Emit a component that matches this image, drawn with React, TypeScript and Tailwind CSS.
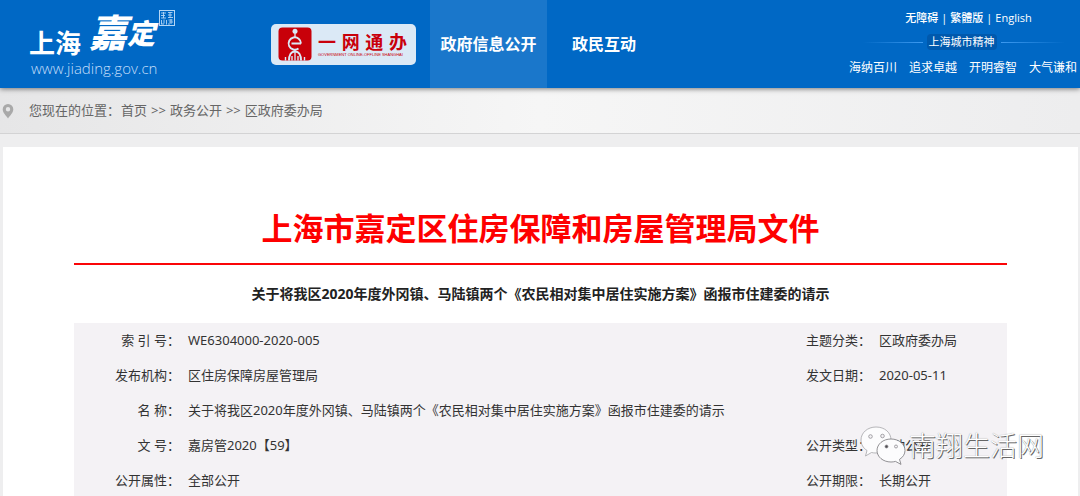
const mottos = ["海纳百川", "追求卓越", "开明睿智", "大气谦和"];

const records = [
  [
    { label: "索 引 号", value: "WE6304000-2020-005" },
    { label: "主题分类", value: "区政府委办局" },
  ],
  [
    { label: "发布机构", value: "区住房保障房屋管理局" },
    { label: "发文日期", value: "2020-05-11" },
  ],
  [{ label: "名 称", value: "关于将我区2020年度外冈镇、马陆镇两个《农民相对集中居住实施方案》函报市住建委的请示" }],
  [
    { label: "文 号", value: "嘉房管2020【59】" },
    { label: "公开类型", value: "主动公开" },
  ],
  [
    { label: "公开属性", value: "全部公开" },
    { label: "公开期限", value: "长期公开" },
  ],
];

function Seal() {
  return (
    <svg viewBox="0 0 16 16" className="mt-[10px] ml-1 size-4" fill="none" stroke="#b5d6f5" aria-hidden="true">
      <rect x="0.5" y="0.5" width="15" height="15" />
      <path d="M2 3h5M2 5.500h4M4.500 2v6M2 8h5M9 2.500h4.500M9 5h4M11 2v6M9 7.500h5M2.500 10v4M5 9.500v4M7.500 10v4.500M9.500 10h4M10 12h4M12 9v5M2 14h3M9 14h2" strokeWidth="0.9" />
    </svg>
  );
}

function SiteLogo() {
  return (
    <a href="#" className="block h-[88px] w-[242px] shrink-0 text-white">
      <span className="flex h-[58px]">
        <span className="pt-[27px] text-[26px] leading-8 font-bold">上海</span>
        <span className="ml-2 pt-[8px] text-[38px] leading-[48px] font-black italic">嘉</span>
        <span className="pt-[8px] text-[28px] leading-[50px] font-black italic">定</span>
        <Seal />
      </span>
      <span className="ml-[2px] block font-['Open_Sans','Noto_Sans',sans-serif] text-[15px] leading-5 font-light text-[#c3defa]">
        www.jiading.gov.cn
      </span>
    </a>
  );
}

function ServiceBadge() {
  return (
    <a href="#" className="flex h-[41px] w-[145px] shrink-0 items-center gap-[6px] rounded-[5px] bg-[#dbe9f6] pl-[7px] text-[#c9000b]">
      <svg viewBox="0 0 34 34" className="size-[34px] shrink-0" aria-hidden="true">
        <rect x="0.5" y="0.5" width="33" height="33" rx="4" fill="#c80009" />
        <g fill="none" stroke="#dbe9f6">
          <path d="M23 16.500H13.500M23 16.500A6.200 6.200 0 1 0 20.500 21.500" strokeWidth="1.9" />
          <path d="M17 6v4M17 22v11.500" strokeWidth="1.300" />
          <path d="M11 33.500c0-5 2-9 6-9s6 4 6 9" strokeWidth="2" />
          <path d="M7.500 30v3.500M26.500 30v3.500M14 29v4.500M20 29v4.500" strokeWidth="1.400" />
        </g>
        <circle cx="17" cy="4.300" r="2.500" fill="#dbe9f6" />
      </svg>
      <span className="block">
        <span className="flex w-[89px] justify-between text-[18px] leading-5 font-bold">
          <span>一</span>
          <span>网</span>
          <span>通</span>
          <span>办</span>
        </span>
        <span className="block font-['Liberation_Sans',sans-serif] text-[4px] leading-[5px] whitespace-nowrap">
          GOVERNMENT ONLINE-OFFLINE SHANGHAI
        </span>
      </span>
    </a>
  );
}

function HeaderAside() {
  return (
    <div className="ml-auto w-[231px] shrink-0 text-white">
      <div className="flex justify-center gap-[3px] pt-[10px] pl-2 font-['Open_Sans','Noto_Sans_CJK_SC',sans-serif] text-[11px] leading-4 font-medium">
        <a href="#">无障碍</a>
        <span>|</span>
        <a href="#">繁體版</a>
        <span>|</span>
        <a href="#">English</a>
      </div>
      <div className="mt-2 flex items-center justify-center pr-[2px] text-[11px] leading-4">
        <span className="mr-1 h-px w-[60px] bg-linear-to-r from-transparent to-[#3d9af0]" />
        <span className="rounded bg-[#0059ad] px-[2px]">上海城市精神</span>
        <span className="ml-1 h-px w-[64px] bg-linear-to-l from-transparent to-[#3d9af0]" />
      </div>
      <ul className="mt-[9px] flex gap-3 font-['KaiTi','Noto_Sans_CJK_SC',serif] text-[12px] leading-4">
        {mottos.map((motto) => (
          <li key={motto} className="whitespace-nowrap">{motto}</li>
        ))}
      </ul>
    </div>
  );
}

function Watermark() {
  return (
    <div className="pointer-events-none absolute top-[279px] right-[34px] flex items-center gap-[3px]">
      <svg viewBox="0 0 46 40" className="h-10 w-[46px]" fill="#fcfcfd" stroke="#a5a4a8" strokeWidth="0.8" aria-hidden="true">
        <path d="M16 1C7.500 1 1 6.800 1 14c0 4.400 2.200 8 6 10.500L5.500 30l6-3.500c1.500.4 3 .5 4.500.5 9 0 15-5.800 15-13S25 1 16 1z" />
        <path d="M31 13c-8 0-14 5.200-14 11.500S23 36 31 36c1.500 0 3-.2 4.500-.6l5.500 3-1.500-5c3.500-2.200 5.500-5.300 5.500-8.900C45 18.200 39 13 31 13z" stroke="#77767a" />
        <g fill="#f4f2f5" stroke="#8f8e93">
          <circle cx="10.500" cy="10.500" r="1.800" />
          <circle cx="22.500" cy="10" r="1.800" />
          <circle cx="26.500" cy="20.500" r="1.500" fill="#4d4b50" />
          <circle cx="36" cy="20.500" r="1.500" />
        </g>
      </svg>
      <span className="text-[27px] leading-10 font-light text-white [text-shadow:1px_1px_0_#666,0_0_1px_#888]">南翔生活网</span>
    </div>
  );
}

export default function App() {
  return (
    <div className="min-h-screen bg-[#eeeeef] font-['Noto_Sans','Noto_Sans_CJK_SC',sans-serif] text-[#444]">
      <header className="relative flex h-[88px] bg-[#0068c5] pl-[29px] shadow-[0_1px_5px_rgba(0,0,0,0.5)]">
        <SiteLogo />
        <div className="flex items-center">
          <ServiceBadge />
        </div>
        <nav className="ml-[14px] flex shrink-0 text-[16px] font-bold text-white">
          <a href="#" className="flex w-[117px] items-center justify-center bg-[#1a77cb]">政府信息公开</a>
          <a href="#" className="flex w-[114px] items-center justify-center">政民互动</a>
        </nav>
        <HeaderAside />
      </header>

      <div className="flex h-[46px] items-center border-b border-[#d3d3d4] bg-linear-to-r from-[#e6e6e7] via-[#f6f6f6] to-[#ededee] pl-[2px] text-[13px] text-[#666]">
        <svg viewBox="0 0 12 16" className="mr-[15px] h-4 w-3" fill="#a9a9a9" aria-hidden="true">
          <path fillRule="evenodd" d="M6 1a5.300 5.300 0 0 0-5.300 5.300C.7 10 4 12.500 6 15.500 8 12.500 11.300 10 11.300 6.300A5.300 5.300 0 0 0 6 1zm0 3a2.200 2.200 0 1 1 0 4.400A2.200 2.200 0 0 1 6 4z" />
        </svg>
        <span>您现在的位置：</span>
        <nav className="ml-[1px] flex gap-1">
          <a href="#">首页</a>
          <span>&gt;&gt;</span>
          <a href="#">政务公开</a>
          <span>&gt;&gt;</span>
          <a href="#">区政府委办局</a>
        </nav>
      </div>

      <main className="relative mx-[2px] mt-[13px] ml-[3px] bg-white px-[71px] pt-[60px]">
        <h1 className="border-b-2 border-[#fa0508] pb-[14px] text-center text-[31px] leading-[42px] font-bold text-[#fe0000]">
          上海市嘉定区住房保障和房屋管理局文件
        </h1>
        <h2 className="mt-[17px] mb-[17px] text-center text-[14px] leading-6 font-bold text-[#222]">
          关于将我区2020年度外冈镇、马陆镇两个《农民相对集中居住实施方案》函报市住建委的请示
        </h2>
        <table className="w-full table-fixed bg-[#f4f2f5] text-[13px] leading-5 text-[#333]">
          <colgroup>
            <col className="w-[114px]" />
            <col />
            <col className="w-[80px]" />
            <col className="w-[128px]" />
          </colgroup>
          <tbody>
            {records.map((fields) => (
              <tr key={fields[0].label} className="h-[35px]">
                {fields.map((field) => [
                  <th key={field.label} scope="row" className="pr-2 pb-[2px] text-right font-normal whitespace-nowrap">
                    {field.label}：
                  </th>,
                  <td key={field.label + "-value"} className="pb-[2px]" colSpan={fields.length === 1 ? 3 : 1}>
                    {field.value}
                  </td>,
                ])}
              </tr>
            ))}
          </tbody>
        </table>
        <Watermark />
      </main>
    </div>
  );
}
